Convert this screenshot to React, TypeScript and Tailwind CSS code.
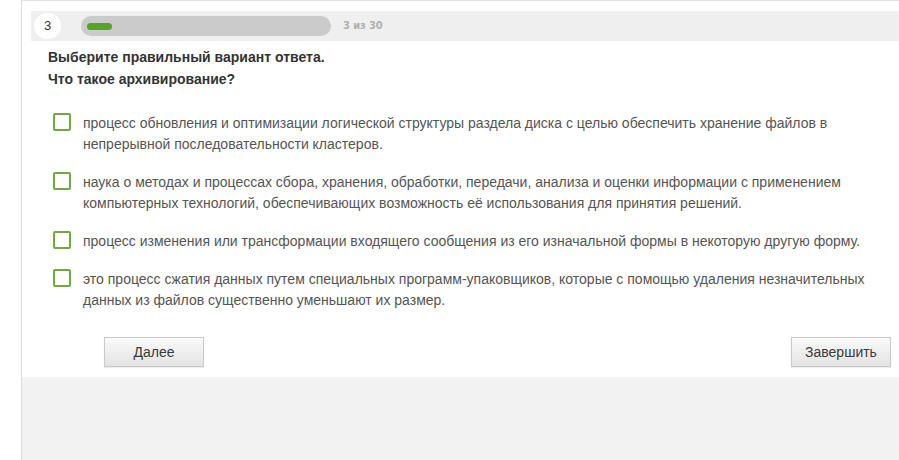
const options = [
  "процесс обновления и оптимизации логической структуры раздела диска с целью обеспечить хранение файлов в непрерывной последовательности кластеров.",
  "наука о методах и процессах сбора, хранения, обработки, передачи, анализа и оценки информации с применением компьютерных технологий, обеспечивающих возможность её использования для принятия решений.",
  "процесс изменения или трансформации входящего сообщения из его изначальной формы в некоторую другую форму.",
  "это процесс сжатия данных путем специальных программ-упаковщиков, которые с помощью удаления незначительных данных из файлов существенно уменьшают их размер.",
]

function Checkbox() {
  return <div className="h-[18px] w-[18px] shrink-0 rounded-[2px] border-2 border-[#72a844] bg-white" />
}

function GrayButton({ label }: { label: string }) {
  return (
    <button className="h-[30px] w-[100px] border border-[#c9c9c9] bg-gradient-to-b from-[#fafafa] to-[#e3e3e3] text-[14px] text-[#3a3a3a] shadow-[0_1px_1px_rgba(0,0,0,0.08)]">
      {label}
    </button>
  )
}

export default function App() {
  return (
    <div className="flex h-[460px] w-[899px] overflow-hidden bg-white font-['Liberation_Sans',Arial,sans-serif]">
      <div className="w-[22px] shrink-0 border-r border-[#dcdcdc] bg-white" />
      <div className="flex min-w-0 flex-1 flex-col">
        <div className="border-t border-[#e2e2e2] bg-white pt-[10px]">
          <div className="ml-[9px] flex h-[30px] items-center bg-[#efefef]">
            <div className="ml-[3px] flex h-[26px] w-[27px] items-center justify-center rounded-full bg-white text-[13px] text-[#333]">
              3
            </div>
            <div className="ml-[20px] flex h-[20px] w-[250px] items-center rounded-full bg-[#cbcbcb] px-[6px]">
              <div className="h-[7px] w-[25px] rounded-full bg-[#58a22a]" />
            </div>
            <span className="ml-[12px] font-['DejaVu_Sans_Condensed','DejaVu_Sans',sans-serif] text-[11px] font-semibold tracking-[-0.1px] text-[#b0b0b0]">
              3 из 30
            </span>
          </div>
        </div>

        <div className="pl-[26px] pt-[5px] text-[14px] font-bold leading-[22px] text-[#333]">
          <p>Выберите правильный вариант ответа.</p>
          <p>Что такое архивирование?</p>
        </div>

        <div className="mt-[23px] flex flex-col gap-[17px] pl-[31px] pr-[26px]">
          {options.map((text, i) => (
            <div key={i} className="flex items-start gap-[12px]">
              <Checkbox />
              <p className="text-[14px] leading-[21px] text-[#555]">{text}</p>
            </div>
          ))}
        </div>

        <div className="mt-[26px] flex justify-between pl-[82px] pr-[8px]">
          <GrayButton label="Далее" />
          <GrayButton label="Завершить" />
        </div>

        <div className="mt-[10px] flex-1 bg-[#f2f2f2]" />
      </div>
    </div>
  )
}
